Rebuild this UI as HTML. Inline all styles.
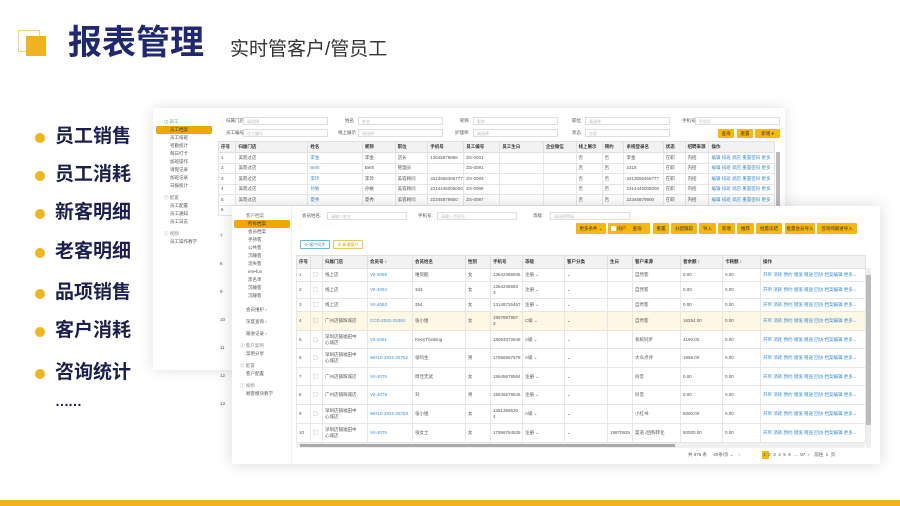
<!DOCTYPE html>
<html><head><meta charset="utf-8"><style>
*{margin:0;padding:0;box-sizing:border-box}
body{width:900px;height:506px;overflow:hidden;background:#fff;font-family:"Liberation Sans","Noto Sans CJK SC",sans-serif;position:relative}
.a{position:absolute}
.t{font-size:4.5px;color:#555;white-space:nowrap;line-height:1}
.bl{color:#3a8ed6}
.bul{position:absolute;left:35px;width:10px;height:10px;border-radius:50%;background:#f0b41c}
.bt{position:absolute;left:55px;font-size:19px;font-weight:bold;color:#1a1f4e;line-height:1}
table{border-collapse:collapse;table-layout:fixed;position:absolute}
td{border:0.5px solid #e6e6e6;font-size:4.5px;color:#555;padding:0 2px;white-space:nowrap;overflow:hidden;line-height:1.3}
th{border:0.5px solid #e0e0e0;background:#f2f2f2;font-size:4.5px;color:#333;font-weight:bold;text-align:left;padding:0 2px;white-space:nowrap;overflow:hidden}
.btn{position:absolute;background:#f5b80e;height:11px;font-size:4.5px;color:#333;text-align:center;line-height:11px;border-radius:1px}
.inp{position:absolute;border:0.5px solid #ddd;height:8px;background:#fff;font-size:4px;color:#bbb;line-height:8px;padding-left:3px}
.side div{font-size:4.5px;color:#555;height:8px;line-height:8px;padding-left:14px}
.sel{background:#f0a800;color:#333!important;border-radius:2px}
</style></head><body>

<!-- header -->
<div class="a" style="left:18px;top:30px;width:22px;height:22px;border:1.5px solid #f3d27a"></div>
<div class="a" style="left:26px;top:36px;width:20px;height:20px;background:#eeb31f"></div>
<div class="a" style="left:68px;top:26px;font-size:34px;font-weight:bold;color:#1f2870;line-height:1;letter-spacing:0px">报表管理</div>
<div class="a" style="left:230px;top:40px;font-size:19px;color:#333;line-height:1">实时管客户/管员工</div>

<!-- bullets -->
<div class="bul" style="top:133px"></div><div class="bt" style="top:127px">员工销售</div>
<div class="bul" style="top:171px"></div><div class="bt" style="top:165px">员工消耗</div>
<div class="bul" style="top:209px"></div><div class="bt" style="top:203px">新客明细</div>
<div class="bul" style="top:248px"></div><div class="bt" style="top:242px">老客明细</div>
<div class="bul" style="top:289px"></div><div class="bt" style="top:283px">品项销售</div>
<div class="bul" style="top:327px"></div><div class="bt" style="top:321px">客户消耗</div>
<div class="bul" style="top:369px"></div><div class="bt" style="top:363px">咨询统计</div>
<div class="a" style="left:55px;top:393px;font-size:14px;font-weight:bold;color:#1a1f4e;letter-spacing:-1px">……</div>

<!-- back screenshot -->
<div class="a" style="left:153px;top:108px;width:632px;height:262px;background:#fff;box-shadow:0 0 14px rgba(0,0,0,0.12)"></div>
<div class="a side" style="left:156px;top:118px;width:56px">
<div style="padding-left:8px;color:#888">◫ 员工</div>
<div class="sel">员工档案</div><div>员工排班</div><div>考勤统计</div><div>每日打卡</div><div>加班操作</div><div>请假记录</div><div>加班记录</div><div>日报统计</div>
<div style="padding-left:8px;color:#888;margin-top:4px">◎ 配置</div><div>员工配置</div><div>员工通知</div><div>员工日志</div>
<div style="padding-left:8px;color:#888;margin-top:4px">ⓘ 视频</div><div>员工操作教学</div>
</div>
<div class="a t" style="left:226px;top:119px">归属门店</div><div class="inp" style="left:243px;top:117px;width:85px">请选择</div>
<div class="a t" style="left:345px;top:119px">姓名</div><div class="inp" style="left:358px;top:117px;width:85px">姓名</div>
<div class="a t" style="left:460px;top:119px">昵称</div><div class="inp" style="left:473px;top:117px;width:85px">昵称</div>
<div class="a t" style="left:572px;top:119px">职位</div><div class="inp" style="left:585px;top:117px;width:85px">请选择</div>
<div class="a t" style="left:682px;top:119px">手机号</div><div class="inp" style="left:695px;top:117px;width:85px">手机号</div>
<div class="a t" style="left:226px;top:131px">员工编号</div><div class="inp" style="left:243px;top:129px;width:85px">员工编号</div>
<div class="a t" style="left:338px;top:131px">线上展示</div><div class="inp" style="left:358px;top:129px;width:85px">请选择</div>
<div class="a t" style="left:455px;top:131px">护理师</div><div class="inp" style="left:473px;top:129px;width:85px">请选择</div>
<div class="a t" style="left:572px;top:131px">状态</div><div class="inp" style="left:585px;top:129px;width:85px">在职</div>
<div class="btn" style="left:718px;top:129px;width:16px;height:9px;line-height:9px">查询</div>
<div class="btn" style="left:737px;top:129px;width:16px;height:9px;line-height:9px">重置</div>
<div class="btn" style="left:755px;top:129px;width:25px;height:9px;line-height:9px">新增 ▾</div>
<table style="left:218px;top:141px;width:557px">
<colgroup><col style="width:16px"><col style="width:66px"><col style="width:50px"><col style="width:30px"><col style="width:30px"><col style="width:33px"><col style="width:33px"><col style="width:40px"><col style="width:30px"><col style="width:24px"><col style="width:20px"><col style="width:36px"><col style="width:20px"><col style="width:22px"><col style="width:60px"></colgroup>
<tr style="height:11px"><th>序号</th><th>归属门店</th><th>姓名</th><th>昵称</th><th>职位</th><th>手机号</th><th>员工编号</th><th>员工生日</th><th>企业微信</th><th>线上展示</th><th>预约</th><th>系统登录名</th><th>状态</th><th>招聘来源</th><th>操作</th></tr>
<tr style="height:10.5px"><td>1</td><td>美而过店</td><td class="bl">李金</td><td>李金</td><td>店长</td><td>13645879856</td><td>ZS-0001</td><td></td><td></td><td>否</td><td>否</td><td>李金</td><td>在职</td><td>内招</td><td class="bl">编辑 排班 调店 重置密码 更多</td></tr>
<tr style="height:10.5px"><td>2</td><td>美而过店</td><td class="bl">Beth</td><td>Beth</td><td>管理员</td><td></td><td>ZS-0091</td><td></td><td></td><td>否</td><td>否</td><td>2318</td><td>在职</td><td>内招</td><td class="bl">编辑 排班 调店 重置密码 更多</td></tr>
<tr style="height:10.5px"><td>3</td><td>美而过店</td><td class="bl">李玲</td><td>李玲</td><td>美容顾问</td><td>3313556466777</td><td>ZS-0093</td><td></td><td></td><td>否</td><td>否</td><td>3313556466777</td><td>在职</td><td>内招</td><td class="bl">编辑 排班 调店 重置密码 更多</td></tr>
<tr style="height:10.5px"><td>4</td><td>美而过店</td><td class="bl">孙敏</td><td>孙敏</td><td>美容顾问</td><td>2314445005000</td><td>ZS-0098</td><td></td><td></td><td>否</td><td>否</td><td>2314445005000</td><td>在职</td><td>内招</td><td class="bl">编辑 排班 调店 重置密码 更多</td></tr>
<tr style="height:10.5px"><td>5</td><td>美而过店</td><td class="bl">夏秀</td><td>夏秀</td><td>美容顾问</td><td>22345879900</td><td>ZS-0097</td><td></td><td></td><td>否</td><td>否</td><td>22345879900</td><td>在职</td><td>内招</td><td class="bl">编辑 排班 调店 重置密码 更多</td></tr>
<tr style="height:10.5px"><td>6</td><td>美而过店</td><td></td><td></td><td></td><td></td><td></td><td></td><td></td><td></td><td></td><td></td><td></td><td></td><td></td></tr>
</table>
<div class="a" style="left:776px;top:152px;width:4px;height:60px;background:#bbb"></div>
<div class="a t" style="left:220px;top:222px;line-height:28px">7<br>8<br>9<br>10<br>11<br>12<br>13</div>

<!-- front screenshot -->
<div class="a" style="left:232px;top:206px;width:648px;height:258px;background:#fff;box-shadow:0 0 16px rgba(0,0,0,0.15)"></div>
<div class="a" style="left:232px;top:206px;width:60px;height:258px;border-right:1px solid #eee"></div>
<div class="a side" style="left:234px;top:212px;width:56px">
<div style="padding-left:12px;color:#777">客户档案</div>
<div class="sel">所有档案</div><div>会员档案</div><div>手持客</div><div>公共客</div><div>沉睡客</div><div>流失客</div><div>em•fun</div><div>黑名单</div><div>沉睡客</div><div>沉睡客</div>
<div style="margin-top:6px;padding-left:12px">会员维护 ›</div><div style="margin-top:4px;padding-left:12px">深度查询 ›</div><div style="margin-top:4px;padding-left:12px">跟进记录 ›</div>
<div style="margin-top:4px;padding-left:6px;color:#888">ⓘ 客户案例</div><div style="padding-left:12px">案例分享</div>
<div style="margin-top:4px;padding-left:6px;color:#888">◎ 配置</div><div style="padding-left:12px">客户配置</div>
<div style="margin-top:4px;padding-left:6px;color:#888">ⓘ 视频</div><div style="padding-left:12px">顾客模块教学</div>
</div>
<div class="a t" style="left:302px;top:214px">会员姓名:</div><div class="inp" style="left:327px;top:212px;width:80px">请输入姓名</div>
<div class="a t" style="left:418px;top:214px">手机号:</div><div class="inp" style="left:437px;top:212px;width:80px">请输入手机号</div>
<div class="a t" style="left:533px;top:214px">等级:</div><div class="inp" style="left:550px;top:212px;width:80px">请选择等级</div>
<div class="btn" style="left:576px;top:223px;width:30px">更多条件 ⌄</div>
<div class="btn" style="left:608px;top:223px;width:42px;text-align:left;padding-left:3px"><span style="display:inline-block;width:5px;height:5px;background:#fff;vertical-align:middle"></span> 闲户 &nbsp;&nbsp;&nbsp; 查询</div>
<div class="btn" style="left:653px;top:223px;width:16px">重置</div>
<div class="btn" style="left:671px;top:223px;width:26px">分配跟踪</div>
<div class="btn" style="left:699px;top:223px;width:17px">导入</div>
<div class="btn" style="left:718px;top:223px;width:17px">新增</div>
<div class="btn" style="left:737px;top:223px;width:17px">推荐</div>
<div class="btn" style="left:756px;top:223px;width:26px">批量冻结</div>
<div class="btn" style="left:785px;top:223px;width:30px">批量会员导入</div>
<div class="btn" style="left:817px;top:223px;width:40px">咨询师跟进导入</div>
<div class="a" style="left:300px;top:240px;width:30px;height:9px;border:1px solid #6bb7d8;border-radius:1px;font-size:4px;color:#3a8ed6;line-height:7px;text-align:center">⟳ 客户同步</div>
<div class="a" style="left:333px;top:240px;width:30px;height:9px;border:1px solid #f0c36a;border-radius:1px;font-size:4px;color:#d9a400;line-height:7px;text-align:center">⊕ 新增客户</div>
<table style="left:296px;top:255px;width:569px">
<colgroup><col style="width:14px"><col style="width:12px"><col style="width:45px"><col style="width:45px"><col style="width:53px"><col style="width:25px"><col style="width:32px"><col style="width:42px"><col style="width:43px"><col style="width:25px"><col style="width:48px"><col style="width:42px"><col style="width:38px"><col style="width:105px"></colgroup>
<tr style="height:13px"><th>序号</th><th></th><th>归属门店</th><th>会员号 ↕</th><th>会员姓名</th><th>性别</th><th>手机号</th><th>等级</th><th>客户分类</th><th>生日</th><th>客户来源</th><th>者余额 ↕</th><th>卡耗额 ↕</th><th>操作</th></tr>
<tr style="height:13px"><td>1</td><td>▢</td><td>线上店</td><td class="bl">VII-4065</td><td>唯资酷</td><td>女</td><td>13642366936</td><td>注册 ⌄</td><td>⌄</td><td></td><td>自然客</td><td>0.00</td><td>0.00</td><td class="bl">开单 消耗 预约 储值 赠送 回访 档案编辑 更多⌄</td></tr>
<tr style="height:17px"><td>2</td><td>▢</td><td>线上店</td><td class="bl">VII-4064</td><td>3d3</td><td>女</td><td>1364236693<br>3</td><td>注册 ⌄</td><td>⌄</td><td></td><td>自然客</td><td>0.00</td><td>0.00</td><td class="bl">开单 消耗 预约 储值 赠送 回访 档案编辑 更多⌄</td></tr>
<tr style="height:13px"><td>3</td><td>▢</td><td>线上店</td><td class="bl">VII-4063</td><td>354</td><td>女</td><td>13149726467</td><td>注册 ⌄</td><td>⌄</td><td></td><td>自然客</td><td>0.00</td><td>0.00</td><td class="bl">开单 消耗 预约 储值 赠送 回访 档案编辑 更多⌄</td></tr>
<tr style="height:19px;background:#fdf7e4"><td>4</td><td>▢</td><td>广州店铺辉城店</td><td class="bl">CCD-2022-25391</td><td>张小姐</td><td>女</td><td>1997897987<br>3</td><td>C级 ⌄</td><td>⌄</td><td></td><td>自然客</td><td>16254.00</td><td>0.00</td><td class="bl">开单 消耗 预约 储值 赠送 回访 档案编辑 更多⌄</td></tr>
<tr style="height:18px"><td>5</td><td>▢</td><td>深圳店铺福田中<br>心城店</td><td class="bl">VII-4061</td><td>KeeyThinking</td><td></td><td>18093372648</td><td>A级 ⌄</td><td>⌄</td><td></td><td>系统同步</td><td>4190.00</td><td>0.00</td><td class="bl">开单 消耗 预约 储值 赠送 回访 档案编辑 更多⌄</td></tr>
<tr style="height:19px"><td>6</td><td>▢</td><td>深圳店铺福田中<br>心城店</td><td class="bl">WH10-2022-25762</td><td>张鸣生</td><td>男</td><td>17966567978</td><td>A级 ⌄</td><td>⌄</td><td></td><td>大众点评</td><td>1898.00</td><td>0.00</td><td class="bl">开单 消耗 预约 储值 赠送 回访 档案编辑 更多⌄</td></tr>
<tr style="height:18px"><td>7</td><td>▢</td><td>广州店铺辉城店</td><td class="bl">VII-4076</td><td>周佳无试</td><td>女</td><td>15645678564</td><td>注册 ⌄</td><td>⌄</td><td></td><td>抖音</td><td>0.00</td><td>0.00</td><td class="bl">开单 消耗 预约 储值 赠送 回访 档案编辑 更多⌄</td></tr>
<tr style="height:19px"><td>8</td><td>▢</td><td>广州店铺辉城店</td><td class="bl">VII-4078</td><td>刘</td><td>男</td><td>15645678645</td><td>注册 ⌄</td><td>⌄</td><td></td><td>抖音</td><td>0.00</td><td>0.00</td><td class="bl">开单 消耗 预约 储值 赠送 回访 档案编辑 更多⌄</td></tr>
<tr style="height:19px"><td>9</td><td>▢</td><td>深圳店铺福田中<br>心城店</td><td class="bl">WH10-2022-25763</td><td>张小姐</td><td>女</td><td>1261365520<br>4</td><td>A级 ⌄</td><td>⌄</td><td></td><td>小红书</td><td>5000.00</td><td>0.00</td><td class="bl">开单 消耗 预约 储值 赠送 回访 档案编辑 更多⌄</td></tr>
<tr style="height:19px"><td>10</td><td>▢</td><td>深圳店铺福田中<br>心城店</td><td class="bl">VII-4076</td><td>张女士</td><td>女</td><td>17958764535</td><td>注册 ⌄</td><td>⌄</td><td>19870925</td><td>渠道 /团购转化</td><td>50000.00</td><td>0.00</td><td class="bl">开单 消耗 预约 储值 赠送 回访 档案编辑 更多⌄</td></tr>
</table>
<div class="a" style="left:296px;top:443px;width:569px;height:5px;background:#f0f0f0"></div>
<div class="a" style="left:300px;top:444px;width:375px;height:3px;background:#aaa"></div>
<div class="a" style="left:866px;top:268px;width:5px;height:180px;background:#eee"></div>
<div class="a" style="left:866px;top:275px;width:5px;height:150px;background:#bbb"></div>
<div class="a t" style="left:688px;top:453px">共 876 条 &nbsp;&nbsp;&nbsp; 40条/页 ⌄ &nbsp;&nbsp; ‹ </div>
<div class="a" style="left:762px;top:451px;width:7px;height:8px;background:#f5b80e"></div>
<div class="a t" style="left:762px;top:453px">&nbsp;1 &nbsp;2 &nbsp;3 &nbsp;4 &nbsp;5 &nbsp;6 &nbsp;… &nbsp;97 &nbsp;› &nbsp;&nbsp; 前往 &nbsp;1 &nbsp;页</div>

<!-- bottom bar -->
<div class="a" style="left:0;top:500px;width:900px;height:6px;background:#eeb31f"></div>
</body></html>
